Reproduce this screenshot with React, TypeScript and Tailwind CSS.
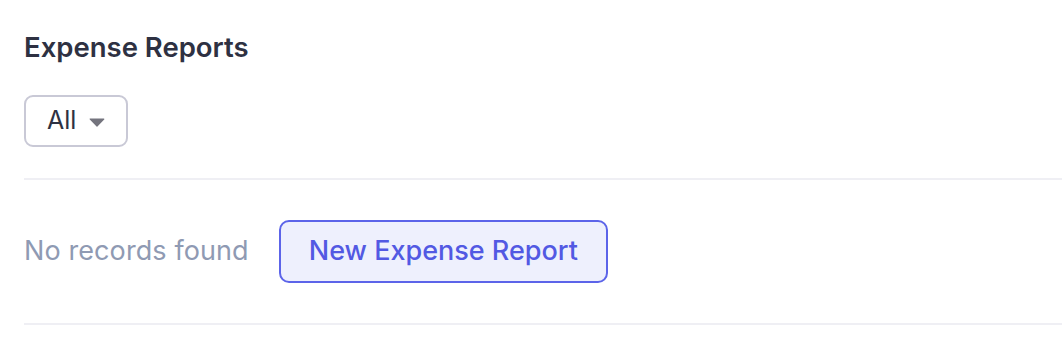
import { useState } from "react";

export default function App() {
  const [filter] = useState("All");

  return (
    <div className="min-h-[356px] bg-white pl-6 pt-[31px] font-['Inter',sans-serif]">
      <h1 className="text-[27.5px] leading-[32px] font-semibold text-[#2e3142]">Expense Reports</h1>

      <button className="mt-[32px] flex h-[52px] w-[104px] items-center gap-[13px] rounded-[9px] border-2 border-[#c9c9d6] pl-[21px] text-[25px] text-[#2e3142]">
        <span>{filter}</span>
        <svg width="16" height="9" viewBox="0 0 16 9" className="mt-[2px]">
          <path d="M1.2 1 L14.8 1 L8 8 Z" fill="#74747e" stroke="#74747e" strokeWidth="1.2" strokeLinejoin="round" />
        </svg>
      </button>

      <div className="mt-[31px] h-[2px] bg-[#efeff4]" />

      <div className="flex items-center gap-[30px] py-[40px]">
        <span className="text-[27px] tracking-[0.1px] text-[#8f9ab3]">No records found</span>
        <button className="flex h-[63px] items-center rounded-[10px] border-2 border-[#5c64e9] bg-[#eef0fd] px-[28px] text-[27px] font-medium text-[#5259e3]">
          New Expense Report
        </button>
      </div>

      <div className="h-[2px] bg-[#efeff4]" />
    </div>
  );
}
